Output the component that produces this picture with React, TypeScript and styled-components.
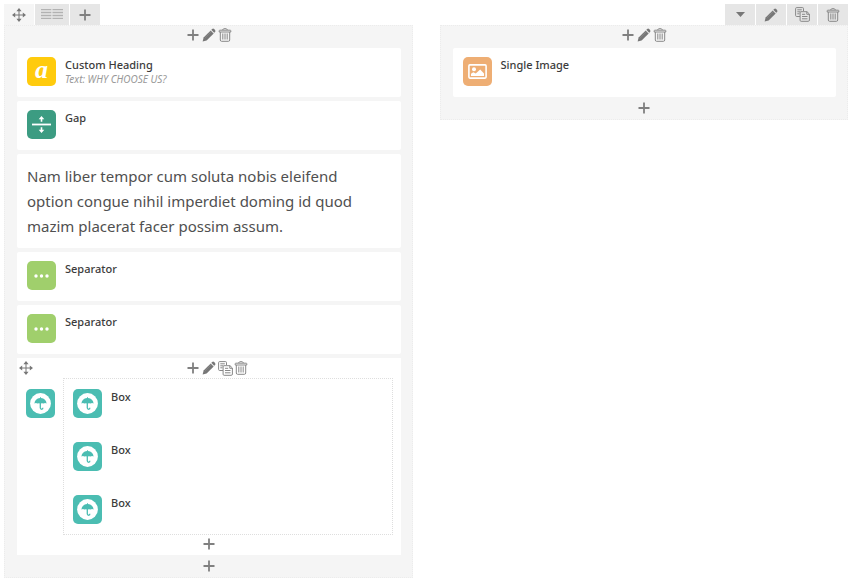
import React from "react";
import styled, { createGlobalStyle } from "styled-components";

const GlobalStyle = createGlobalStyle`
  * { box-sizing: border-box; }
  body {
    margin: 0;
    background: #fff;
    color: #444;
    font-family: "Noto Sans", "Open Sans", sans-serif;
    font-size: 12px;
  }
`;

const Page = styled.main`
  padding: 4px 2px 4px 4px;
`;

const RowControls = styled.header`
  display: flex;
  justify-content: space-between;
  height: 21px;
`;

const TabGroup = styled.div`
  display: flex;
  gap: 1px;
`;

const Tab = styled.button<{ $active?: boolean; $wide?: boolean }>`
  display: flex;
  align-items: center;
  justify-content: center;
  width: ${(p) => (p.$wide ? 34 : 30)}px;
  padding: 0;
  border: 0;
  color: #777;
  background: ${(p) => (p.$active ? "#f5f5f5" : "#e6e6e6")};
`;

const Columns = styled.div`
  display: grid;
  grid-template-columns: 1fr 1fr;
  align-items: start;
  gap: 27px;
`;

const Column = styled.section`
  display: flex;
  flex-direction: column;
  padding: 0 11px 0 12px;
  border: 1px dotted #ececec;
  background: #f5f5f5;
`;

const Controls = styled.div`
  display: flex;
  flex: none;
  align-items: center;
  justify-content: center;
  height: 22px;
  padding-bottom: 4px;
`;

const IconButton = styled.button`
  display: flex;
  align-items: center;
  justify-content: center;
  width: 16px;
  height: 16px;
  padding: 0;
  border: 0;
  background: none;
  color: #777;
`;

const Stack = styled.div`
  display: flex;
  flex-direction: column;
  gap: 4px;
`;

const Card = styled.article`
  display: flex;
  gap: 9px;
  min-height: 49px;
  padding: 9px 10px;
  border-radius: 2px;
  background: #fff;
`;

const TextCard = styled.article`
  padding: 10px 10px 9px;
  border-radius: 2px;
  background: #fff;
`;

const Paragraph = styled.p`
  max-width: 345px;
  margin: 0;
  font-size: 15px;
  line-height: 25px;
  color: #505050;
`;

const Title = styled.h3`
  margin: 0;
  font-size: 11px;
  font-weight: 500;
  line-height: 15px;
  color: #3c3c3c;
`;

const Detail = styled.p`
  margin: 0;
  font-size: 10px;
  font-style: italic;
  line-height: 14px;
  color: #999;
`;

const Tile = styled.span<{ $color: string }>`
  display: flex;
  flex: none;
  align-items: center;
  justify-content: center;
  width: 29px;
  height: 29px;
  border-radius: 5px;
  background: ${(p) => p.$color};
  color: #fff;
`;

const Letter = styled.span`
  font-family: "Liberation Serif", serif;
  font-size: 26px;
  font-weight: 700;
  font-style: italic;
  line-height: 20px;
  padding-bottom: 4px;
`;

const Group = styled.article`
  padding: 0 8px 0 9px;
  background: #fff;
`;

const GroupHeader = styled.div`
  display: flex;
  align-items: center;
  height: 20px;
  margin: 0 -8px;
`;

const GroupTools = styled.div`
  display: flex;
  flex: 1;
  justify-content: center;
`;

const GroupBody = styled.div`
  display: flex;
  gap: 8px;
`;

const GroupTile = styled.div`
  padding-top: 11px;
`;

const Nested = styled.div`
  display: flex;
  flex: 1;
  flex-direction: column;
  gap: 4px;
  border: 1px dotted #dedede;
`;

const NestedItem = styled(Card)`
  padding: 10px 9px 9px;
`;

const Footer = styled.div<{ $nested?: boolean }>`
  display: flex;
  align-items: center;
  justify-content: center;
  height: ${(p) => (p.$nested ? 20 : 22)}px;
  padding-bottom: ${(p) => (p.$nested ? 2 : 0)}px;
`;

const PlusIcon = () => (
  <svg width="12" height="12" viewBox="0 0 12 12" aria-hidden="true">
    <path d="M6 .5v11M.5 6h11" fill="none" stroke="#808080" strokeWidth="1.8" />
  </svg>
);

const PencilIcon = () => (
  <svg width="14" height="14" viewBox="0 0 14 14" aria-hidden="true">
    <path d="M.6 13.4l1-4 7.1-7 3 3-7.1 7z" fill="currentColor" />
    <path d="M9.3 1.8l.9-.9q1-.7 2 .2l.8.9q.9 1 .1 1.9l-.9.9z" fill="#777" />
    <path d="M8.9 2.2l3 3" stroke="#d6d6d6" strokeWidth=".7" />
    <path d="M2.8 10l6.5-6.4" stroke="#999" strokeWidth=".5" />
  </svg>
);

const TrashIcon = () => (
  <svg width="14" height="14" viewBox="0 0 14 14" fill="none" stroke="#888" aria-hidden="true">
    <path d="M1.2 4V2.8q0-.6.6-.6h10.4q.6 0 .6.6V4zM4.5 2q.4-1.4 2.5-1.4T9.5 2" />
    <path d="M2.3 4v8q0 1.3 1.3 1.3h6.8q1.3 0 1.3-1.3V4M4.8 5.5v6M7 5.5v6M9.2 5.5v6" />
  </svg>
);

const CopyIcon = () => (
  <svg width="15" height="15" viewBox="0 0 15 15" fill="none" stroke="#888" aria-hidden="true">
    <path d="M5 9.5H1.7q-1.1 0-1.1-1V1.6q0-1 1.1-1h5.8q1 0 1 1V4" />
    <path d="M2.3 2.8h4.5M2.3 4.8h3M2.3 6.8h2.2" />
    <path d="M6 4.7h6L14.4 7v6q0 1.3-1.1 1.3H6.1q-1 0-1-1V5.7q0-1 .9-1zM11.8 4.8v2.5h2.5M7 7.3h3.2M7 9.5h5.5M7 11.8h5.5" />
  </svg>
);

const MoveIcon = () => (
  <svg width="14" height="14" viewBox="0 0 14 14" aria-hidden="true">
    <path d="M7 2v10M2 7h10" stroke="currentColor" />
    <path d="M7 0l2.6 3.2H4.4zM7 14l2.6-3.2H4.4zM0 7l3.2-2.6v5.2zM14 7l-3.2-2.6v5.2z" fill="currentColor" />
  </svg>
);

const LayoutIcon = () => (
  <svg width="22" height="11" viewBox="0 0 22 11" aria-hidden="true">
    <path d="M0 .5h10.3M0 3.5h10.3M0 6.5h10.3M0 9.5h10.3M11.5 .5H22M11.5 3.5H22M11.5 6.5H22M11.5 9.5H22" stroke="#b2b2b2" />
    <path d="M0 2h10.3M0 5h10.3M0 8h10.3M11.5 2H22M11.5 5H22M11.5 8H22" stroke="#cfcfcf" />
  </svg>
);

const CaretIcon = () => (
  <svg width="9" height="5" viewBox="0 0 9 5" aria-hidden="true">
    <path d="M0 0h9L4.5 5z" fill="currentColor" />
  </svg>
);

const GapIcon = () => (
  <svg width="19" height="19" viewBox="0 0 19 19" aria-hidden="true">
    <path d="M0 9.5h19" stroke="#fff" strokeWidth="1.8" />
    <path d="M9.5 1l2.8 3.2h-2v2.6H8.7V4.2h-2zM9.5 18l2.8-3.2h-2v-2.6H8.7v2.6h-2z" fill="#fff" />
  </svg>
);

const DotsIcon = () => (
  <svg width="15" height="4" viewBox="0 0 15 4" fill="#fff" aria-hidden="true">
    <circle cx="2" cy="2" r="1.7" />
    <circle cx="7.5" cy="2" r="1.7" />
    <circle cx="13" cy="2" r="1.7" />
  </svg>
);

const ImageIcon = () => (
  <svg width="19" height="15" viewBox="0 0 19 15" aria-hidden="true">
    <rect x=".9" y=".9" width="17.2" height="13.2" rx="1" fill="none" stroke="#fff" strokeWidth="1.6" />
    <circle cx="6" cy="5.2" r="2" fill="#fff" />
    <path d="M3 12V9.8l2.3-1.6 2.5 1.3 4.4-4 3.8 4V12z" fill="#fff" />
  </svg>
);

const UmbrellaIcon = () => (
  <svg width="21" height="21" viewBox="0 0 21 21" aria-hidden="true">
    <circle cx="10.5" cy="10.5" r="10.4" fill="#fff" />
    <path d="M4.4 10.5q.6-5 5.6-5.5v-.8h1V5q5 .5 5.6 5.5-1.6-.9-3 0-1.6-.7-3.1 0-1.5-.7-3.1 0-1.4-.9-3 0z" fill="#4bbdb2" />
    <path d="M10.3 9v6q.2 1.4 1.6 1.2 1-.2.9-1.4" fill="none" stroke="#4bbdb2" strokeWidth="1.3" />
  </svg>
);

const Tool = ({ label, children }: { label: string; children: React.ReactNode }) => (
  <IconButton type="button" aria-label={label}>{children}</IconButton>
);

const EditTools = ({ copy }: { copy?: boolean }) => (
  <>
    <Tool label="Add element"><PlusIcon /></Tool>
    <Tool label="Edit"><PencilIcon /></Tool>
    {copy && <Tool label="Duplicate"><CopyIcon /></Tool>}
    <Tool label="Delete"><TrashIcon /></Tool>
  </>
);

type ElementProps = { title: string; color: string; icon: React.ReactNode; detail?: string };

const ElementCard = ({ title, color, icon, detail }: ElementProps) => (
  <Card>
    <Tile $color={color}>{icon}</Tile>
    <div>
      <Title>{title}</Title>
      {detail && <Detail>{detail}</Detail>}
    </div>
  </Card>
);

const boxTile = <Tile $color="#4bbdb2"><UmbrellaIcon /></Tile>;

export default function App() {
  return (
    <>
      <GlobalStyle />
      <Page>
        <RowControls>
          <TabGroup>
            <Tab type="button" $active aria-label="Move row"><MoveIcon /></Tab>
            <Tab type="button" $wide aria-label="Row layout"><LayoutIcon /></Tab>
            <Tab type="button" aria-label="Add column"><PlusIcon /></Tab>
          </TabGroup>
          <TabGroup>
            <Tab type="button" aria-label="Toggle row"><CaretIcon /></Tab>
            <Tab type="button" aria-label="Edit row"><PencilIcon /></Tab>
            <Tab type="button" aria-label="Duplicate row"><CopyIcon /></Tab>
            <Tab type="button" aria-label="Delete row"><TrashIcon /></Tab>
          </TabGroup>
        </RowControls>
        <Columns>
          <Column>
            <Controls><EditTools /></Controls>
            <Stack>
              <ElementCard title="Custom Heading" detail="Text: WHY CHOOSE US?" color="#ffcb0d" icon={<Letter>a</Letter>} />
              <ElementCard title="Gap" color="#3c9c82" icon={<GapIcon />} />
              <TextCard>
                <Paragraph>
                  Nam liber tempor cum soluta nobis eleifend option congue nihil imperdiet doming id quod mazim placerat facer possim assum.
                </Paragraph>
              </TextCard>
              <ElementCard title="Separator" color="#a0cf6c" icon={<DotsIcon />} />
              <ElementCard title="Separator" color="#a0cf6c" icon={<DotsIcon />} />
              <Group>
                <GroupHeader>
                  <Tool label="Move box"><MoveIcon /></Tool>
                  <GroupTools><EditTools copy /></GroupTools>
                </GroupHeader>
                <GroupBody>
                  <GroupTile>{boxTile}</GroupTile>
                  <Nested>
                    {[1, 2, 3].map((n) => (
                      <NestedItem key={n}>
                        {boxTile}
                        <Title>Box</Title>
                      </NestedItem>
                    ))}
                  </Nested>
                </GroupBody>
                <Footer $nested><Tool label="Add to box"><PlusIcon /></Tool></Footer>
              </Group>
            </Stack>
            <Footer><Tool label="Add to column"><PlusIcon /></Tool></Footer>
          </Column>
          <Column>
            <Controls><EditTools /></Controls>
            <Stack>
              <ElementCard title="Single Image" color="#eeae74" icon={<ImageIcon />} />
            </Stack>
            <Footer><Tool label="Add to column"><PlusIcon /></Tool></Footer>
          </Column>
        </Columns>
      </Page>
    </>
  );
}
